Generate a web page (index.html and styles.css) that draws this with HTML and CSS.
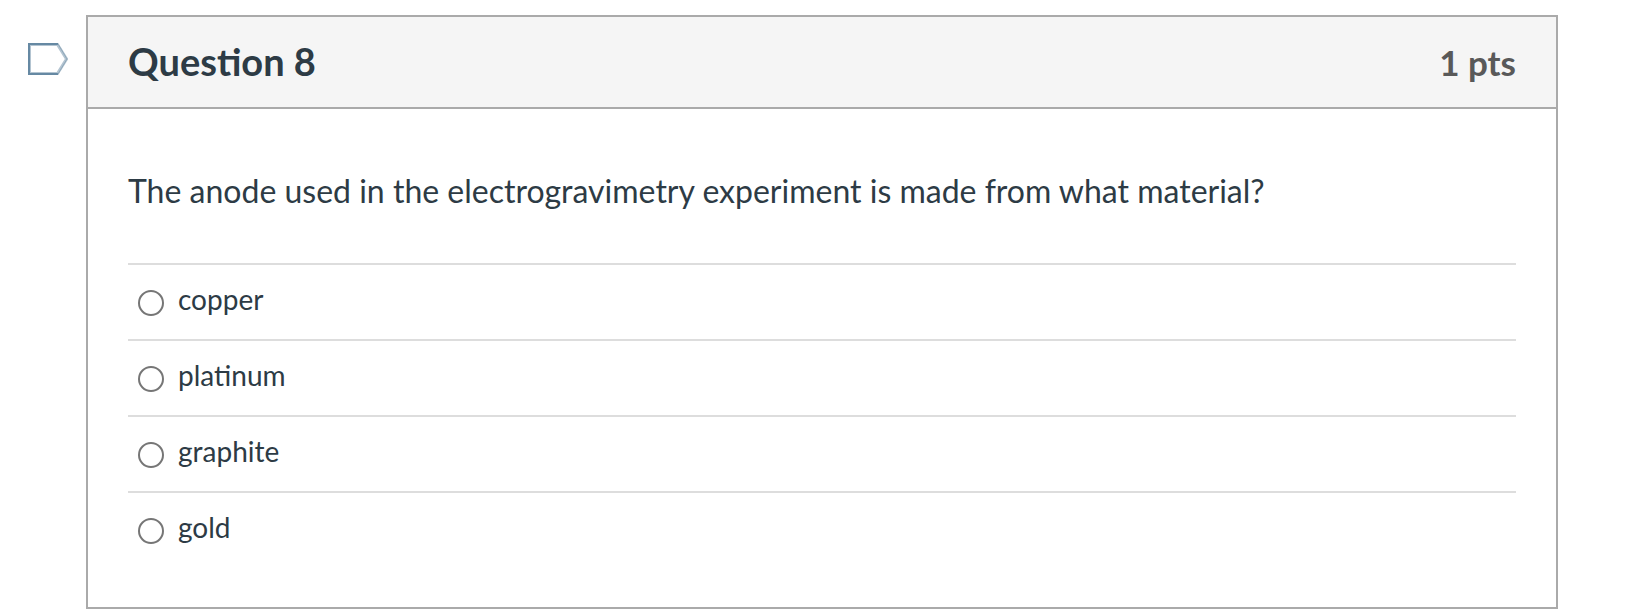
FILE: index.html
```html
<!DOCTYPE html>
<html lang="en">
<head>
  <meta charset="UTF-8">
  <meta name="viewport" content="width=device-width, initial-scale=1.0">
  <title>Quiz</title>
  <link rel="stylesheet" href="styles.css">
</head>
<body>
  <main class="quiz">
    <button class="flag" type="button" aria-label="Flag question">
      <svg width="40" height="32" viewBox="0 0 40 32" fill="none">
        <path d="M1.5 1.5H29.5L38.5 16L29.5 30.5H1.5Z" stroke="#b3c4d1" stroke-width="3"/>
        <path d="M30 1H1V31H30" stroke="#6689a3" stroke-width="2"/>
        <path d="M30 1L39 16L30 31" stroke="#8fa8ba" stroke-width="1"/>
      </svg>
    </button>

    <section class="question">
      <header class="question-header">
        <h2 class="question-name">Question 8</h2>
        <span class="question-points">1 pts</span>
      </header>

      <div class="question-body">
        <p class="question-text" id="questionText">The anode used in the electrogravimetry experiment is made from what material?</p>

        <div class="answers" role="radiogroup" aria-labelledby="questionText">
          <div class="answer">
            <input type="radio" name="answer" id="answer1">
            <label for="answer1">copper</label>
          </div>
          <div class="answer">
            <input type="radio" name="answer" id="answer2">
            <label for="answer2">platinum</label>
          </div>
          <div class="answer">
            <input type="radio" name="answer" id="answer3">
            <label for="answer3">graphite</label>
          </div>
          <div class="answer">
            <input type="radio" name="answer" id="answer4">
            <label for="answer4">gold</label>
          </div>
        </div>
      </div>
    </section>
  </main>
</body>
</html>
```
FILE: styles.css
```css
* {
  box-sizing: border-box;
}

body {
  font-family: Lato, "Helvetica Neue", Arial, sans-serif;
  margin: 0;
  background-color: #fff;
  color: #2d3b45;
}

.quiz {
  display: flex;
  align-items: flex-start;
  gap: 18px;
  padding: 15px 88px 7px 28px;
}

.flag {
  margin: 28px 0 0;
  padding: 0;
  border: none;
  background: none;
  cursor: pointer;
}

.flag svg {
  display: block;
}

.question {
  flex: 1;
  border: 2px solid #aaa;
}

.question-header {
  display: flex;
  align-items: baseline;
  justify-content: space-between;
  padding: 20px 40px 21px;
  border-bottom: 2px solid #aaa;
  background-color: #f5f5f5;
}

.question-name {
  margin: 0;
  font-size: 38px;
  line-height: 48px;
}

.question-points {
  font-size: 35px;
  line-height: 48px;
  font-weight: bold;
  color: #595959;
}

.question-body {
  padding: 58px 40px 40px;
}

.question-text {
  margin: 0 0 48px;
  font-size: 32px;
  line-height: 48px;
}

.answer {
  display: flex;
  align-items: flex-start;
  gap: 14px;
  padding: 16px 10px 22px;
  border-top: 2px solid #ddd;
}

.answer input {
  appearance: none;
  flex: none;
  width: 26px;
  height: 26px;
  margin: 9px 0 0;
  border: 2px solid #767676;
  border-radius: 50%;
  background-color: #fff;
}

.answer input:checked {
  border-width: 8px;
  border-color: #0374b5;
}

.answer label {
  font-size: 28px;
  line-height: 36px;
}
```
